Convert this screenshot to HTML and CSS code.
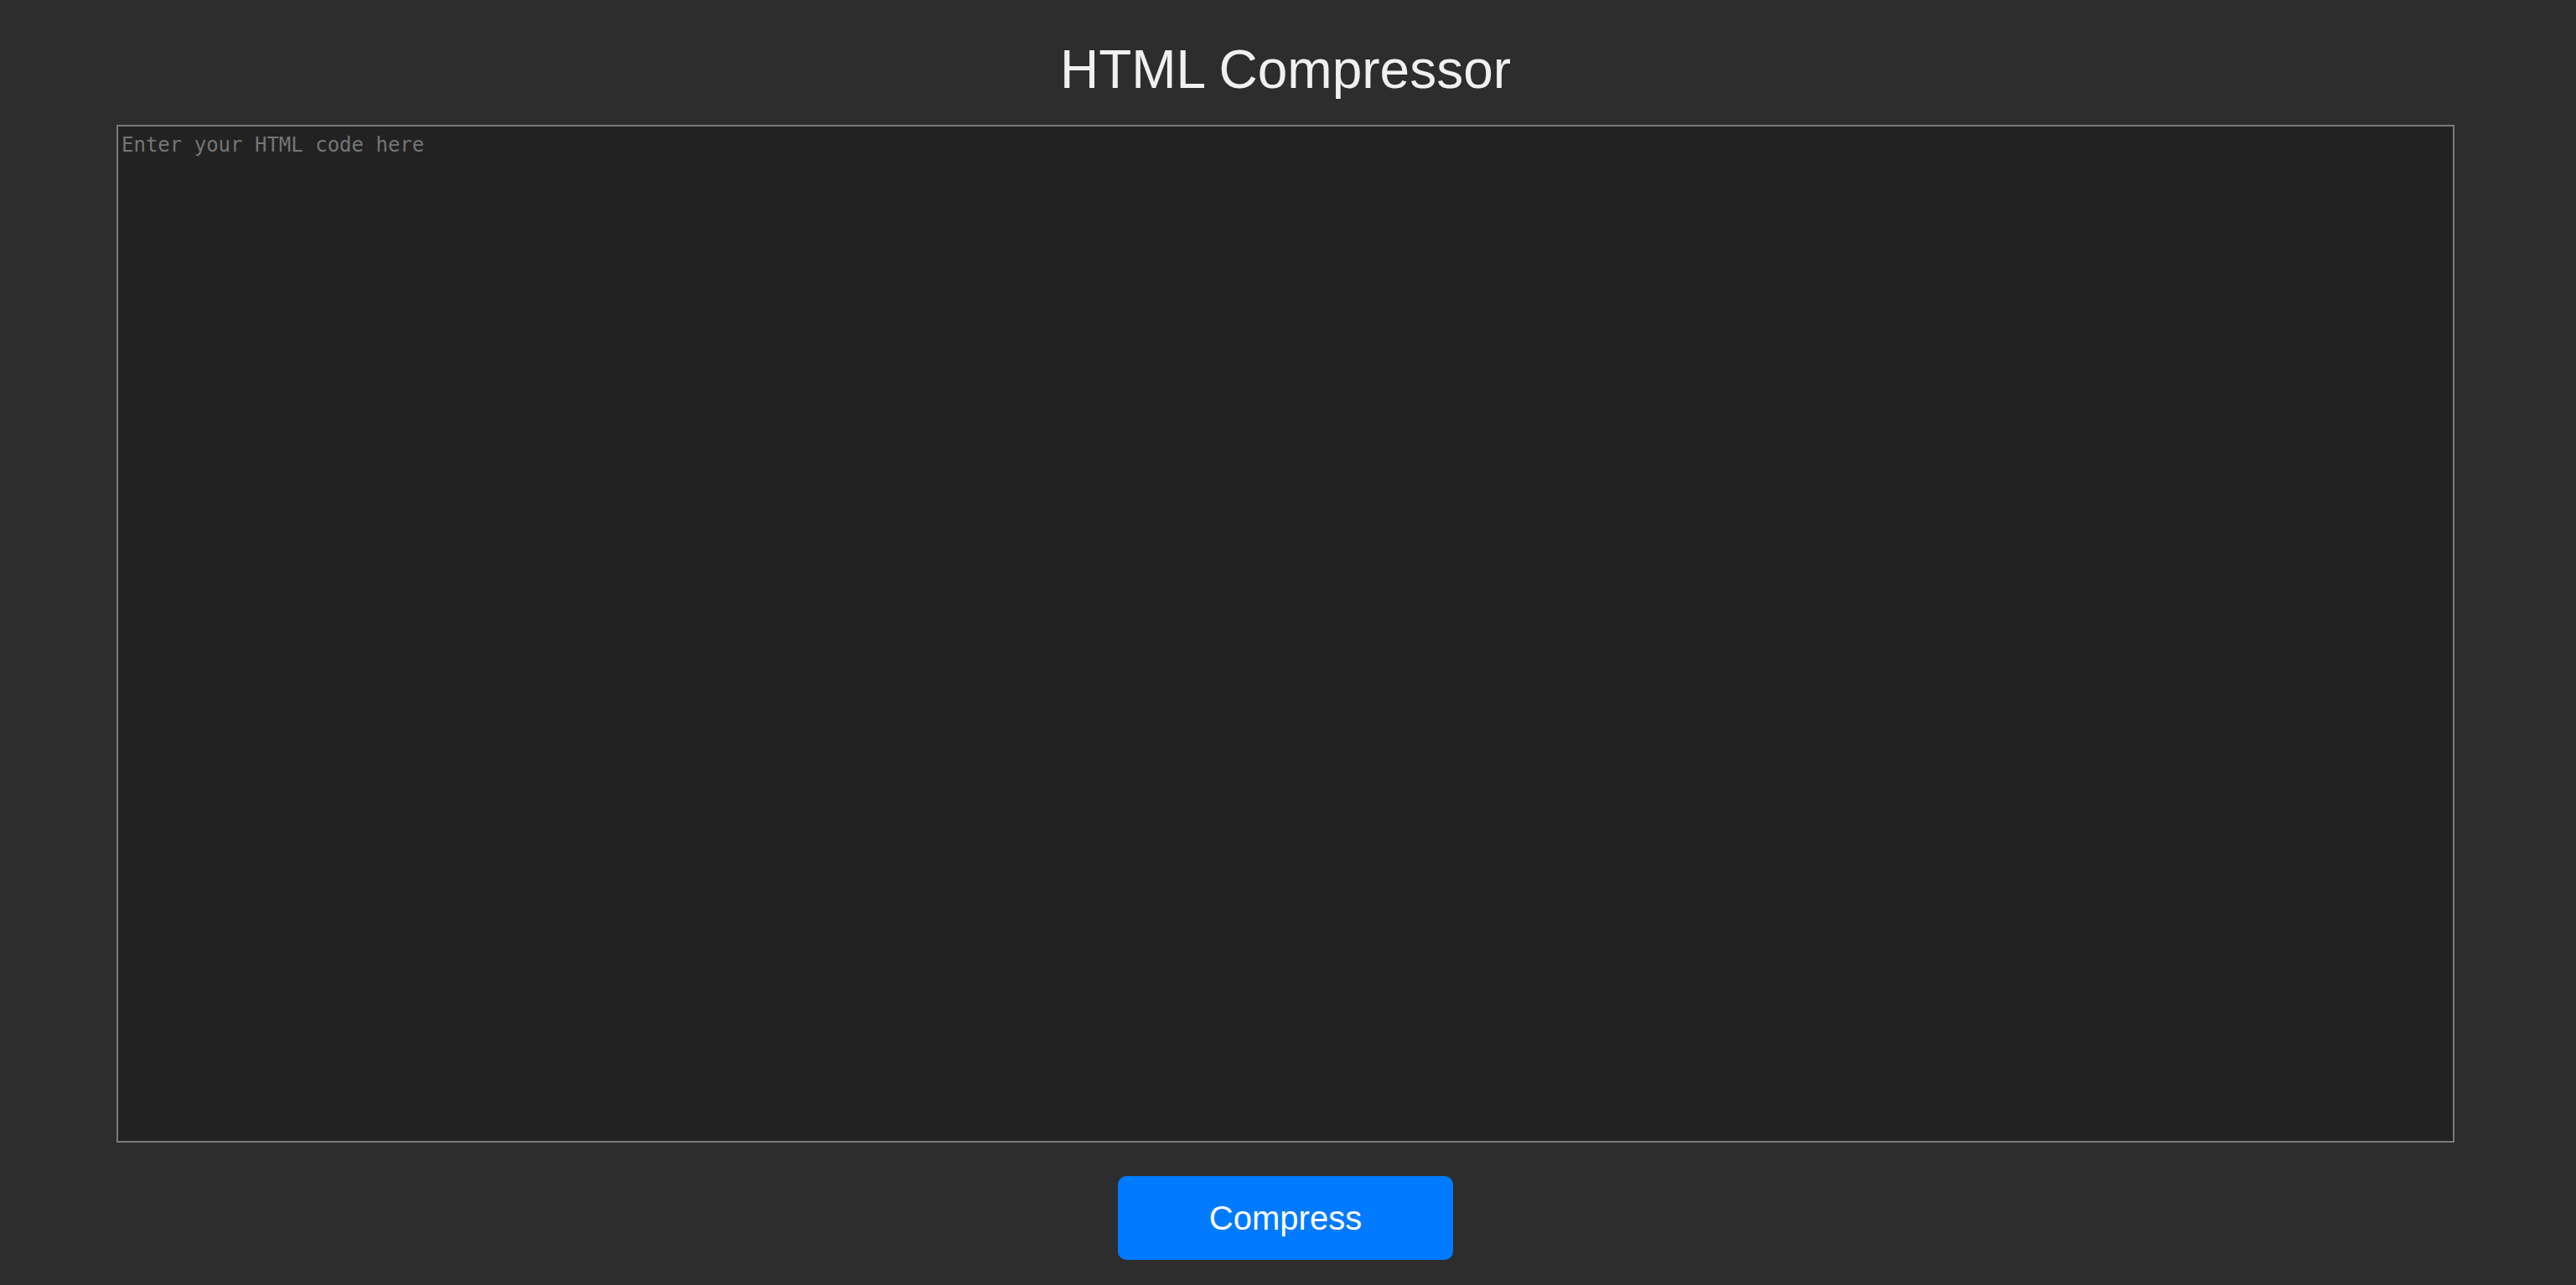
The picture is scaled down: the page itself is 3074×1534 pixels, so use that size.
FILE: index.html
```html
<!DOCTYPE html>
<html lang="en">
<head>
<meta charset="utf-8">
<title>HTML Compressor</title>
<link rel="stylesheet" href="styles.css">
</head>
<body>
<main class="page">
  <h1 class="title">HTML Compressor</h1>
  <textarea class="editor" placeholder="Enter your HTML code here" autofocus></textarea>
  <button class="compress-btn" type="button">Compress</button>
</main>
</body>
</html>
```

FILE: styles.css
```css
html, body {
  margin: 0;
  padding: 0;
  background: #2d2d2d;
}

body {
  font-family: "Liberation Sans", Arial, Helvetica, sans-serif;
  color: #f0f0f0;
}

.page {
  width: 2790px;
  margin-left: 139px;
  display: flex;
  flex-direction: column;
  align-items: center;
}

.title {
  margin: 46px 0 29px;
  font-size: 64px;
  line-height: 74px;
  font-weight: 400;
  color: #f0f0f0;
}

.editor {
  box-sizing: border-box;
  width: 2790px;
  height: 1215px;
  margin: 0;
  padding: 8px 4px;
  border: 2px solid #7a7a7a;
  background: #222222;
  color: #e0e0e0;
  caret-color: #ffffff;
  font-family: "DejaVu Sans Mono", "Liberation Mono", monospace;
  font-size: 24px;
  resize: none;
  outline: none;
}

.editor::placeholder {
  color: #757575;
  opacity: 1;
}

.compress-btn {
  margin-top: 40px;
  width: 400px;
  height: 100px;
  border: none;
  border-radius: 10px;
  background: #007bff;
  color: #ffffff;
  font-family: "Liberation Sans", Arial, Helvetica, sans-serif;
  font-size: 40px;
  cursor: pointer;
}
```
